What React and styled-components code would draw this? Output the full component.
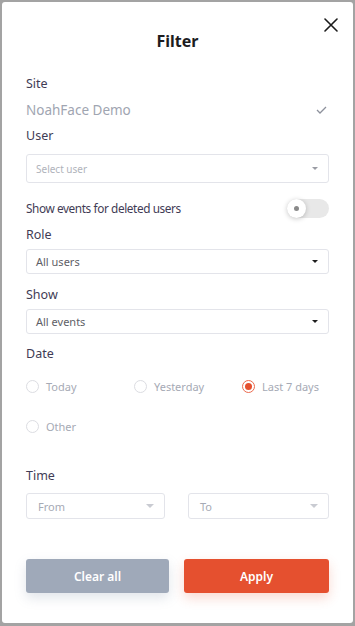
import React from "react";
import styled, { createGlobalStyle } from "styled-components";

const Global = createGlobalStyle`
  html, body { margin: 0; padding: 0; }
  body {
    background: #a3a3a3;
    font-family: "Noto Sans", "Open Sans", Arial, sans-serif;
    width: 355px;
    height: 626px;
    overflow: hidden;
  }
`;

const Backdrop = styled.div`
  width: 355px;
  height: 626px;
  padding: 2px 2px 3px 2px;
  box-sizing: border-box;
  position: relative;
`;

const Modal = styled.div`
  position: relative;
  background: #ffffff;
  border-radius: 3px;
  height: 621px;
  box-sizing: border-box;
  padding: 29px 24px 0 24px;
  display: flex;
  flex-direction: column;
`;

const CloseBtn = styled.button`
  position: absolute;
  top: 14px;
  right: 13px;
  width: 18px;
  height: 18px;
  padding: 0;
  border: 0;
  background: transparent;
  display: flex;
  align-items: center;
  justify-content: center;
`;

const Title = styled.h1`
  margin: 0;
  font-size: 16px;
  line-height: 20px;
  font-weight: 700;
  text-align: center;
  color: #1d1d1f;
`;

const Label = styled.div`
  margin-top: ${(p) => p.$mt}px;
  font-size: 12.5px;
  line-height: 18px;
  color: #3f3c55;
`;

const SiteRow = styled.div`
  margin-top: 7px;
  height: 20px;
  display: flex;
  align-items: center;
  justify-content: space-between;
  font-size: 13.5px;
  color: #a0a5b1;
  padding-right: 2px;
`;

const SelectBox = styled.div`
  margin-top: ${(p) => p.$mt}px;
  height: ${(p) => p.$h}px;
  box-sizing: border-box;
  border: 1px solid #e3e4ea;
  border-radius: 3px;
  display: flex;
  align-items: center;
  justify-content: space-between;
  padding: 0 10px 0 9px;
  font-size: ${(p) => (p.$placeholder ? 10 : 11)}px;
  color: ${(p) => (p.$placeholder ? "#b0b3bb" : "#5e5e66")};
`;

const Caret = styled.span`
  width: 0;
  height: 0;
  border-left: ${(p) => p.$s}px solid transparent;
  border-right: ${(p) => p.$s}px solid transparent;
  border-top: ${(p) => p.$s}px solid ${(p) => p.$c};
`;

const ToggleRow = styled.div`
  margin-top: 15px;
  height: 20px;
  display: flex;
  align-items: center;
  justify-content: space-between;
  font-size: 11.8px;
  letter-spacing: -0.4px;
  color: #3f3c55;
`;

const Track = styled.div`
  width: 42px;
  height: 19px;
  border-radius: 10px;
  background: #e8e8e8;
  position: relative;
`;

const Knob = styled.div`
  position: absolute;
  left: 0;
  top: 0;
  width: 19px;
  height: 19px;
  border-radius: 50%;
  background: #fff;
  box-shadow: 0 1px 5px rgba(0, 0, 0, 0.22);
  display: flex;
  align-items: center;
  justify-content: center;
  &::after {
    content: "";
    width: 5px;
    height: 5px;
    border-radius: 50%;
    background: #8a8a8a;
  }
`;

const RadioGrid = styled.div`
  margin-top: ${(p) => p.$mt}px;
  display: grid;
  grid-template-columns: 108px 108px 1fr;
  height: 16px;
  align-items: center;
`;

const RadioItem = styled.label`
  display: flex;
  align-items: center;
  gap: 7px;
  font-size: 11px;
  color: #a6aab5;
`;

const RadioCircle = styled.span`
  width: 13px;
  height: 13px;
  box-sizing: border-box;
  border-radius: 50%;
  border: 1px solid ${(p) => (p.$on ? "#ec6a4e" : "#dcdde2")};
  display: flex;
  align-items: center;
  justify-content: center;
  &::after {
    content: "";
    display: ${(p) => (p.$on ? "block" : "none")};
    width: 7px;
    height: 7px;
    border-radius: 50%;
    background: #e5502f;
  }
`;

const TimeGrid = styled.div`
  margin-top: 8px;
  display: grid;
  grid-template-columns: 139px 141px;
  justify-content: space-between;
`;

const TimeBox = styled.div`
  height: 26px;
  box-sizing: border-box;
  border: 1px solid #e3e4ea;
  border-radius: 3px;
  display: flex;
  align-items: center;
  justify-content: space-between;
  padding: 0 10px 0 11px;
  font-size: 11px;
  color: #a6aab5;
`;

const ButtonRow = styled.div`
  margin-top: 40px;
  display: grid;
  grid-template-columns: 143px 145px;
  justify-content: space-between;
`;

const Button = styled.button`
  height: 34px;
  border: 0;
  border-radius: 3px;
  font-family: inherit;
  font-size: 12px;
  font-weight: 600;
  color: #ffffff;
  background: ${(p) => (p.$primary ? "#e5502f" : "#9fa9b9")};
  box-shadow: 0 5px 12px
    ${(p) => (p.$primary ? "rgba(229, 80, 47, 0.22)" : "rgba(120, 135, 160, 0.22)")};
`;

function CloseIcon() {
  return (
    <svg width="14" height="14" viewBox="0 0 14 14">
      <path d="M1 1L13 13M13 1L1 13" stroke="#1a1a1a" strokeWidth="1.6" strokeLinecap="round" />
    </svg>
  );
}

function Check() {
  return (
    <svg width="11" height="8" viewBox="0 0 11 8">
      <path d="M1 4L4 7L10 1" stroke="#8d919c" strokeWidth="1.3" fill="none" />
    </svg>
  );
}

export default function App() {
  return (
    <>
      <Global />
      <Backdrop>
        <Modal>
          <CloseBtn aria-label="Close">
            <CloseIcon />
          </CloseBtn>
          <Title>Filter</Title>

          <Label $mt={24}>Site</Label>
          <SiteRow>
            <span>NoahFace Demo</span>
            <Check />
          </SiteRow>

          <Label $mt={7}>User</Label>
          <SelectBox $mt={9} $h={29} $placeholder>
            <span>Select user</span>
            <Caret $s={3} $c="#9a9ca4" />
          </SelectBox>

          <ToggleRow>
            <span>Show events for deleted users</span>
            <Track>
              <Knob />
            </Track>
          </ToggleRow>

          <Label $mt={8}>Role</Label>
          <SelectBox $mt={5} $h={25}>
            <span>All users</span>
            <Caret $s={3.5} $c="#1e1e1e" />
          </SelectBox>

          <Label $mt={12}>Show</Label>
          <SelectBox $mt={5} $h={25}>
            <span>All events</span>
            <Caret $s={3.5} $c="#1e1e1e" />
          </SelectBox>

          <Label $mt={11}>Date</Label>
          <RadioGrid $mt={15}>
            <RadioItem>
              <RadioCircle />
              Today
            </RadioItem>
            <RadioItem>
              <RadioCircle />
              Yesterday
            </RadioItem>
            <RadioItem>
              <RadioCircle $on />
              Last 7 days
            </RadioItem>
          </RadioGrid>
          <RadioGrid $mt={24}>
            <RadioItem>
              <RadioCircle />
              Other
            </RadioItem>
          </RadioGrid>

          <Label $mt={33}>Time</Label>
          <TimeGrid>
            <TimeBox>
              <span>From</span>
              <Caret $s={4.5} $c="#c9cbd2" />
            </TimeBox>
            <TimeBox>
              <span>To</span>
              <Caret $s={4.5} $c="#c9cbd2" />
            </TimeBox>
          </TimeGrid>

          <ButtonRow>
            <Button>Clear all</Button>
            <Button $primary>Apply</Button>
          </ButtonRow>
        </Modal>
      </Backdrop>
    </>
  );
}
